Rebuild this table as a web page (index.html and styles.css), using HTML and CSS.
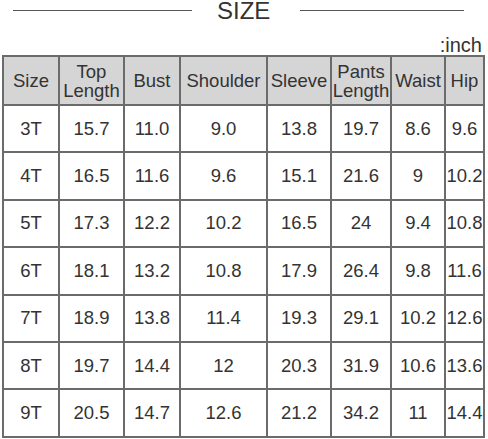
FILE: index.html
```html
<!DOCTYPE html>
<html>
<head>
<meta charset="utf-8">
<link rel="stylesheet" href="styles.css">
</head>
<body>
<div class="page">
  <div class="title">
    <span class="rule rule-left"></span>
    <span class="title-text">SIZE</span>
    <span class="rule rule-right"></span>
  </div>
  <div class="unit">:inch</div>
  <table class="chart">
    <colgroup>
      <col class="c1"><col class="c2"><col class="c3"><col class="c4"><col class="c5"><col class="c6"><col class="c7"><col class="c8">
    </colgroup>
    <thead>
      <tr>
        <th>Size</th><th>Top<br>Length</th><th>Bust</th><th>Shoulder</th><th>Sleeve</th><th>Pants<br>Length</th><th>Waist</th><th>Hip</th>
      </tr>
    </thead>
    <tbody>
      <tr><td>3T</td><td>15.7</td><td>11.0</td><td>9.0</td><td>13.8</td><td>19.7</td><td>8.6</td><td>9.6</td></tr>
      <tr><td>4T</td><td>16.5</td><td>11.6</td><td>9.6</td><td>15.1</td><td>21.6</td><td>9</td><td>10.2</td></tr>
      <tr><td>5T</td><td>17.3</td><td>12.2</td><td>10.2</td><td>16.5</td><td>24</td><td>9.4</td><td>10.8</td></tr>
      <tr><td>6T</td><td>18.1</td><td>13.2</td><td>10.8</td><td>17.9</td><td>26.4</td><td>9.8</td><td>11.6</td></tr>
      <tr><td>7T</td><td>18.9</td><td>13.8</td><td>11.4</td><td>19.3</td><td>29.1</td><td>10.2</td><td>12.6</td></tr>
      <tr><td>8T</td><td>19.7</td><td>14.4</td><td>12</td><td>20.3</td><td>31.9</td><td>10.6</td><td>13.6</td></tr>
      <tr><td>9T</td><td>20.5</td><td>14.7</td><td>12.6</td><td>21.2</td><td>34.2</td><td>11</td><td>14.4</td></tr>
    </tbody>
  </table>
</div>
</body>
</html>
```
FILE: styles.css
```css
html, body {
  margin: 0;
  padding: 0;
  background: #ffffff;
}
.page {
  width: 488px;
  height: 439px;
  font-family: "Liberation Sans", Arial, sans-serif;
  color: #333333;
  overflow: hidden;
}
.title {
  display: flex;
  align-items: flex-start;
  height: 22px;
}
.rule {
  display: block;
  height: 1px;
  margin-top: 10px;
  background: #555555;
}
.rule-left {
  margin-left: 13px;
  width: 179px;
}
.title-text {
  margin-left: 25px;
  width: 83px;
  font-size: 24px;
  line-height: 22px;
}
.rule-right {
  width: 164px;
}
.unit {
  margin-top: 13px;
  height: 20px;
  font-size: 20px;
  line-height: 20px;
  text-align: right;
  padding-right: 6px;
}
.chart {
  margin-left: 2px;
  border-collapse: collapse;
  table-layout: fixed;
  width: 483px;
}
.chart th, .chart td {
  border: 2px solid #6b6b6b;
  padding: 0;
  text-align: center;
  font-size: 18.5px;
  font-weight: normal;
  color: #333333;
  white-space: nowrap;
}
.chart th {
  background: #d5d5d5;
  height: 47px;
  line-height: 19px;
}
.chart td {
  height: 45.4px;
  line-height: 20px;
}
.c1 { width: 56px; }
.c2 { width: 65px; }
.c3 { width: 56px; }
.c4 { width: 87px; }
.c5 { width: 64px; }
.c6 { width: 60px; }
.c7 { width: 54px; }
.c8 { width: 39px; }
```
